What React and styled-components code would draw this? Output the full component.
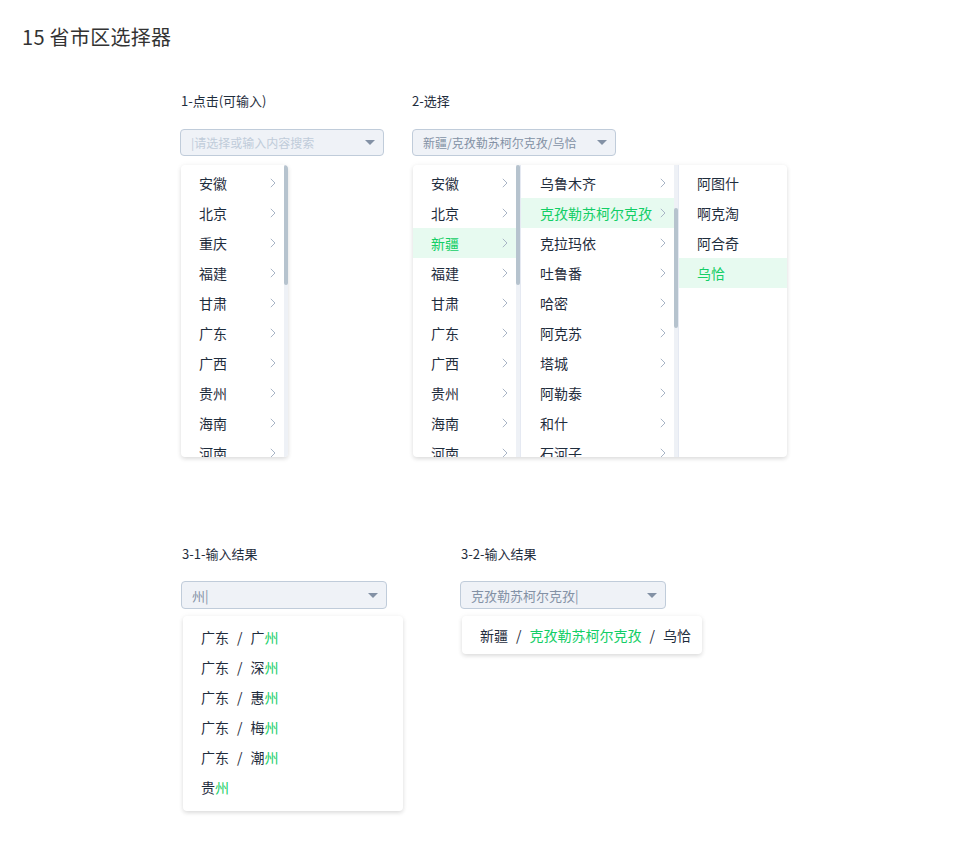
import React from 'react'
import styled, { createGlobalStyle } from 'styled-components'

const GlobalStyle = createGlobalStyle`
  body {
    margin: 0;
    background: #fff;
    font-family: "Noto Sans CJK SC", "Noto Sans", sans-serif;
    color: #1f2d3d;
  }
`

const Page = styled.div`
  width: 961px;
  min-height: 846px;
`

const Title = styled.h1`
  margin: 0;
  padding: 26px 0 0 22px;
  font-size: 20px;
  line-height: 22px;
  font-weight: 400;
  letter-spacing: 0.3px;
  color: #333;
`

const Row = styled.div`
  display: flex;
  align-items: flex-start;
  padding-left: ${p => p.$left}px;
  margin-top: ${p => p.$top}px;
`

const Field = styled.div`
  display: flex;
  flex-direction: column;
  width: ${p => p.$width}px;
`

const Label = styled.div`
  font-size: 13px;
  line-height: 20px;
  color: #1f2d3d;
  padding-left: ${p => p.$indent ?? 1}px;
  margin-bottom: ${p => p.$gap}px;
`

const SelectBox = styled.div`
  box-sizing: border-box;
  width: ${p => p.$width}px;
  height: ${p => p.$height}px;
  display: flex;
  align-items: center;
  padding: 0 8px 0 10px;
  background: #eff2f7;
  border: 1px solid #c0ccda;
  border-radius: 4px;
  font-size: ${p => p.$size}px;
  color: ${p => (p.$placeholder ? '#c0ccda' : '#8391a5')};
`

const SelectText = styled.span`
  flex: 1;
  white-space: nowrap;
  overflow: hidden;
`

const Caret = styled.span`
  width: 0;
  height: 0;
  border-left: 5px solid transparent;
  border-right: 5px solid transparent;
  border-top: 5px solid #8391a5;
`

const Menu = styled.div`
  display: flex;
  margin-top: ${p => p.$top}px;
  margin-left: 1px;
  height: 292px;
  background: #fff;
  border-radius: 4px;
  box-shadow: 0 2px 4px rgba(0, 0, 0, 0.12), 0 0 6px rgba(0, 0, 0, 0.04);
  overflow: hidden;
  align-self: flex-start;
`

const Column = styled.div`
  position: relative;
  box-sizing: border-box;
  width: ${p => p.$width}px;
  padding-top: 3px;
  overflow: hidden;
  border-right: ${p => (p.$border ? '1px solid #e5e9f2' : 'none')};
`

const Item = styled.div`
  display: flex;
  align-items: center;
  justify-content: space-between;
  height: 30px;
  padding: 0 ${p => (p.$track ? 12 : 8)}px 0 ${p => p.$pad || 18}px;
  font-size: 14px;
  white-space: nowrap;
  color: ${p => (p.$active ? '#13ce66' : '#1f2d3d')};
  background: ${p => (p.$active ? '#e7faf0' : 'transparent')};
`

const Track = styled.div`
  position: absolute;
  top: 0;
  right: 0;
  bottom: 0;
  width: 4px;
  background: #eef1f6;
`

const Thumb = styled.div`
  position: absolute;
  left: 0;
  width: 4px;
  height: 120px;
  border-radius: 2px;
  background: #b6c3ce;
`

const Suggest = styled.div`
  margin-top: 7px;
  margin-left: 2px;
  width: ${p => p.$width}px;
  padding: ${p => p.$pad};
  background: #fff;
  border-radius: 4px;
  box-shadow: 0 2px 4px rgba(0, 0, 0, 0.12), 0 0 6px rgba(0, 0, 0, 0.04);
`

const SuggestItem = styled.div`
  height: 30px;
  line-height: 30px;
  padding-left: 18px;
  font-size: 14px;
  white-space: nowrap;
  color: #1f2d3d;
`

const Sep = styled.span`
  margin: 0 8px;
`

const Hit = styled.span`
  color: #13ce66;
`

const Chevron = () => (
  <svg width="6" height="10" viewBox="0 0 6 10">
    <path d="M0.8 0.8 L5 5 L0.8 9.2" fill="none" stroke="#a9b5c6" strokeWidth="1" />
  </svg>
)

const provinces = ['安徽', '北京', '重庆', '福建', '甘肃', '广东', '广西', '贵州', '海南', '河南']
const xjProvinces = ['安徽', '北京', '新疆', '福建', '甘肃', '广东', '广西', '贵州', '海南', '河南']
const cities = ['乌鲁木齐', '克孜勒苏柯尔克孜', '克拉玛依', '吐鲁番', '哈密', '阿克苏', '塔城', '阿勒泰', '和什', '石河子']
const counties = ['阿图什', '啊克淘', '阿合奇', '乌恰']

const List = ({ items, active, thumb, width, pad, arrows = true, border }) => (
  <Column $width={width} $border={border}>
    {items.map(name => (
      <Item key={name} $active={name === active} $track={thumb !== undefined} $pad={pad}>
        <span>{name}</span>
        {arrows && <Chevron />}
      </Item>
    ))}
    {thumb !== undefined && (
      <Track>
        <Thumb style={{ top: thumb }} />
      </Track>
    )}
  </Column>
)

const Select = ({ text, placeholder, width, height, size }) => (
  <SelectBox $width={width} $height={height} $size={size} $placeholder={placeholder}>
    <SelectText>{text}</SelectText>
    <Caret />
  </SelectBox>
)

const matches = [
  ['广东', '广'],
  ['广东', '深'],
  ['广东', '惠'],
  ['广东', '梅'],
  ['广东', '潮'],
]

export default function App() {
  return (
    <Page>
      <GlobalStyle />
      <Title>15 省市区选择器</Title>

      <Row $left={180} $top={43}>
        <Field $width={232}>
          <Label $gap={18}>1-点击(可输入)</Label>
          <Select width={204} height={27} size={12} placeholder text="|请选择或输入内容搜索" />
          <Menu $top={9}>
            <List items={provinces} width={107} thumb={0} />
          </Menu>
        </Field>
        <Field $width={380}>
          <Label $gap={18} $indent={0}>2-选择</Label>
          <Select width={204} height={27} size={12} text="新疆/克孜勒苏柯尔克孜/乌恰" />
          <Menu $top={9}>
            <List items={xjProvinces} active="新疆" width={108} thumb={0} border />
            <List items={cities} active="克孜勒苏柯尔克孜" width={158} thumb={43} pad={19} border />
            <List items={counties} active="乌恰" width={108} arrows={false} />
          </Menu>
        </Field>
      </Row>

      <Row $left={181} $top={87}>
        <Field $width={279}>
          <Label $gap={17}>3-1-输入结果</Label>
          <Select width={206} height={28} size={13} text="州|" />
          <Suggest $width={220} $pad="6px 0 9px">
            {matches.map(([p, c]) => (
              <SuggestItem key={c}>
                {p}<Sep>/</Sep>{c}<Hit>州</Hit>
              </SuggestItem>
            ))}
            <SuggestItem>贵<Hit>州</Hit></SuggestItem>
          </Suggest>
        </Field>
        <Field $width={300}>
          <Label $gap={17}>3-2-输入结果</Label>
          <Select width={206} height={28} size={13} text="克孜勒苏柯尔克孜|" />
          <Suggest $width={240} $pad="4px 0">
            <SuggestItem>
              新疆<Sep>/</Sep><Hit>克孜勒苏柯尔克孜</Hit><Sep>/</Sep>乌恰
            </SuggestItem>
          </Suggest>
        </Field>
      </Row>
    </Page>
  )
}
